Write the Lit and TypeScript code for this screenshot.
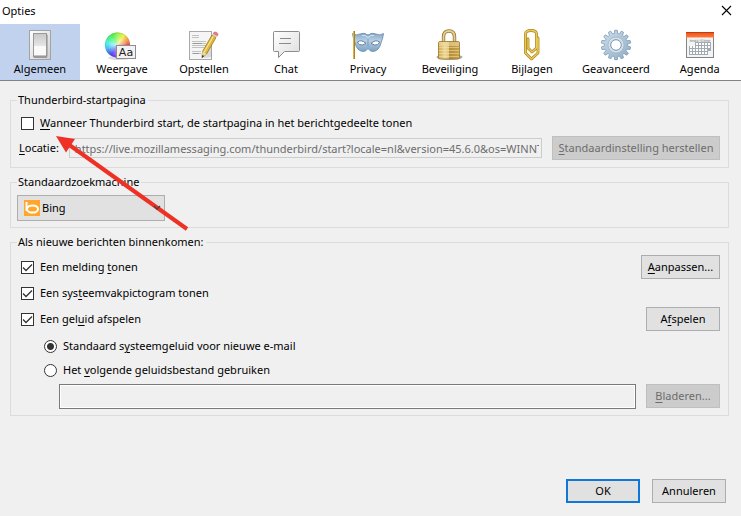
import { LitElement, html, svg, css, nothing, type SVGTemplateResult } from "lit";
import { customElement, property, state } from "lit/decorators.js";
import { classMap } from "lit/directives/class-map.js";

const polar = (cx: number, cy: number, r: number, deg: number) => {
  const a = (deg * Math.PI) / 180;
  return `${(cx + r * Math.cos(a)).toFixed(2)} ${(cy - r * Math.sin(a)).toFixed(2)}`;
};

const wheel = () =>
  Array.from({ length: 60 }, (_, i) => {
    const from = i * 6 - 1;
    const to = i * 6 + 7;
    return svg`<path d="M11.5 16 L${polar(11.5, 16, 12.5, from)} A12.5 12.5 0 0 0 ${polar(11.5, 16, 12.5, to)} Z" fill="hsl(${i * 6 + 5} 85% 60%)"/>`;
  });

const gearPath = () => {
  const teeth = 14;
  const step = 360 / teeth;
  const pts: string[] = [];
  for (let i = 0; i < teeth; i++) {
    const a = i * step + 90;
    pts.push(
      polar(16, 16, 11.6, a - step * 0.33),
      polar(16, 16, 14.8, a - step * 0.2),
      polar(16, 16, 14.8, a + step * 0.2),
      polar(16, 16, 11.6, a + step * 0.33),
    );
  }
  return `M${pts.join("L")}Z`;
};

const ICONS: Record<string, () => SVGTemplateResult> = {
  general: () => svg`
    <defs>
      <linearGradient id="plate" x2="1" y2="1"><stop stop-color="#fff"/><stop offset="1" stop-color="#cfcfcf"/></linearGradient>
      <linearGradient id="rocker" x2="0" y2="1"><stop stop-color="#c9c9c9"/><stop offset="1" stop-color="#e6e6e6"/></linearGradient>
    </defs>
    <rect x="5.5" y="1.5" width="21" height="29" fill="url(#plate)" stroke="#a3a3a3"/>
    <path d="M9 27h14v2H10z" fill="#999"/>
    <path d="M22 5l2 1v22l-2-1z" fill="#b4b4b4"/>
    <rect x="9.5" y="4.5" width="13" height="23" fill="#fafafa" stroke="#999"/>
    <rect x="10" y="5" width="12" height="12" fill="url(#rocker)"/>
    <path d="M10 26.5h12" stroke="#c4c4c4"/>`,
  display: () => svg`
    <defs>
      <radialGradient id="glow"><stop stop-color="#fff" stop-opacity=".6"/><stop offset="1" stop-color="#fff" stop-opacity="0"/></radialGradient>
    </defs>
    <ellipse cx="13" cy="29" rx="11" ry="2" fill="#ddd"/>
    ${wheel()}
    <circle cx="11.5" cy="16" r="11" fill="url(#glow)"/>
    <circle cx="11.5" cy="16" r="12.3" fill="none" stroke="#555" stroke-opacity=".25" stroke-width=".6"/>
    <rect x="10.5" y="16.5" width="19" height="13" fill="#f3f3f3" stroke="#8e8e8e"/>
    <text x="20" y="27" text-anchor="middle" font-family="DejaVu Sans, sans-serif" font-size="11" fill="#222">Aa</text>`,
  compose: () => svg`
    <rect x="1.5" y="2.5" width="22" height="28" fill="#f5f5f5" stroke="#a9a9a9"/>
    <path d="M4 6.5h7M4 8.5h7M4 12.5h14M4 14.5h14M4 16.5h15M4 18.5h12M4 22.5h9M4 24.5h9" stroke="#c2c2c2"/>
    <path d="M5 14.5h9M5 24.5h6" stroke="#999"/>
    <path d="M15 29l9-1-1-12z" fill="#888" opacity=".25"/>
    <path d="M24 6l4 2.600-9.500 16.400-4.500 3.500.5-6z" fill="#dfb93c" stroke="#8c6a12" stroke-width=".7"/>
    <path d="M25.300 7.200L16 23.500" stroke="#f8e38c" stroke-width="1.300"/>
    <path d="M14.500 22.500l4 2.500-4.500 3.500z" fill="#f0dca8"/>
    <path d="M14.300 26l2 1-2.500 2z" fill="#333"/>
    <path d="M24 6l1.200-2 4.200 2.600-1.300 2z" fill="#c8cdd0"/>
    <path d="M25.200 4.200q1.300-2 3.600-.8 2 1.300.8 3.400z" fill="#ee7c79" stroke="#cf5e60" stroke-width=".6"/>`,
  chat: () => svg`
    <defs><linearGradient id="bubble" x2="1" y2="1"><stop stop-color="#fff"/><stop offset="1" stop-color="#ddd"/></linearGradient></defs>
    <path d="M4.500 2.500h24q1 0 1 1v18q0 1-1 1H14.500l-6 6v-6H4.500q-1 0-1-1v-18q0-1 1-1z" fill="url(#bubble)" stroke="#8c8c8c"/>
    <path d="M10 9.500h11M9 14.500h12" stroke="#8a8a8a"/>`,
  privacy: () => svg`
    <defs><linearGradient id="mask" x2="0" y2="1"><stop stop-color="#86a9c8"/><stop offset=".4" stop-color="#b7cee2"/><stop offset="1" stop-color="#7ba2c6"/></linearGradient></defs>
    <path d="M.5 4.500Q4 7 8 5q4-2 8 1 4-3 8-1 4 2 7.500-.5Q31 9 29 14q-2 8-8 8.500-3 0-5-3-2 3-5 3Q5 22 3 14 1 9 .5 4.500z" fill="url(#mask)" stroke="#6587a6" stroke-width=".8"/>
    <path d="M2 2v28" stroke="#a47412" stroke-width="2"/>
    <path d="M1.700 2v28" stroke="#e9c04e"/>
    <path d="M10 6.500q3-1 6 2 3-3 6-2" fill="none" stroke="#d3e4f2"/>
    <path d="M16 10v8" stroke="#7b9dbd"/>
    <path d="M5.500 13q4-3 8.500 1.500-4 2.500-6.500 1-1.500-1-2-2.500zM27.500 13q-4-3-8.500 1.500 4 2.500 6.500 1 1.500-1 2-2.500z" fill="#fff" stroke="#54779c" stroke-width=".9"/>`,
  security: () => svg`
    <defs>
      <linearGradient id="brass"><stop stop-color="#cda950"/><stop offset=".3" stop-color="#eed797"/><stop offset=".5" stop-color="#dfc27a"/><stop offset=".51" stop-color="#b58c38"/><stop offset="1" stop-color="#c9a24c"/></linearGradient>
    </defs>
    <ellipse cx="15.500" cy="28" rx="13" ry="3" fill="#555" opacity=".5"/>
    <path d="M9.500 14V8q0-6 5.500-6t5.500 6v6" fill="none" stroke="#94762f" stroke-width="3.400"/>
    <path d="M9.500 14V8q0-6 5.500-6t5.500 6v6" fill="none" stroke="#e6cf92" stroke-width="1.800"/>
    <rect x="4.500" y="12.500" width="21" height="17.500" rx="1.500" fill="url(#brass)" stroke="#9a7626" stroke-width=".8"/>
    <rect x="5" y="13" width="20" height="4" fill="#f0dda4" opacity=".6"/>
    <path d="M5 18.500h20M5 21.500h20M5 24.500h20M5 27.500h20" stroke="#f6e7b4" stroke-opacity=".65" stroke-width=".8"/>`,
  attachments: () => svg`
    <g fill="none" stroke-linejoin="round" stroke-linecap="round">
      <path d="M22 9V24L15.500 30 9.500 24V5q0-3.500 5.500-3.500T20.500 5V19L16 23l-4-4V10" stroke="#a98520" stroke-width="2.800"/>
      <path d="M22 9V24L15.500 30 9.500 24V5q0-3.500 5.500-3.500T20.500 5V19L16 23l-4-4V10" stroke="#ecca55" stroke-width="1.400"/>
    </g>`,
  advanced: () => svg`
    <defs><linearGradient id="steel" x2="1" y2="1"><stop stop-color="#cfe0ec"/><stop offset="1" stop-color="#8eabc3"/></linearGradient></defs>
    <path d="${gearPath()}" fill="url(#steel)" stroke="#7e9bb4" stroke-width=".8"/>
    <circle cx="16" cy="16" r="8" fill="#d5e2ec" stroke="#9db5c9" stroke-width=".8"/>
    <circle cx="16" cy="16" r="5.300" fill="#fff" stroke="#7893ac"/>`,
  calendar: () => svg`
    <defs><linearGradient id="band" x2="0" y2="1"><stop stop-color="#e8501a"/><stop offset="1" stop-color="#ff7a3a"/></linearGradient></defs>
    <rect x="2.500" y="3.500" width="27" height="25" fill="#f4f4f4" stroke="#858585"/>
    <rect x="2" y="3" width="28" height="5.500" fill="url(#band)"/>
    <path d="M2 3.500h28" stroke="#c03d10"/>
    <text x="16" y="12.500" text-anchor="middle" font-family="DejaVu Sans, sans-serif" font-size="4" font-weight="bold" fill="#aaa">moz-time</text>
    <path d="M11 13h16v9h-3v4H5V17h6z" fill="#a3a9b1"/>
    <path d="M12 14h2v2h-2zm3 0h2v2h-2zm3 0h2v2h-2zm3 0h2v2h-2zm3 0h2v2h-2zM6 17h2v2H6zm3 0h2v2H9zm3 0h2v2h-2zm3 0h2v2h-2zm3 0h2v2h-2zm3 0h2v2h-2zm3 0h2v2h-2zM6 20h2v2H6zm3 0h2v2H9zm3 0h2v2h-2zm3 0h2v2h-2zm3 0h2v2h-2zm3 0h2v2h-2zM6 23h2v2H6zm3 0h2v2H9zm3 0h2v2h-2zm3 0h2v2h-2zm3 0h2v2h-2zm3 0h2v2h-2z" fill="#fff"/>`,
};

const TABS = [
  ["general", "Algemeen"],
  ["display", "Weergave"],
  ["compose", "Opstellen"],
  ["chat", "Chat"],
  ["privacy", "Privacy"],
  ["security", "Beveiliging"],
  ["attachments", "Bijlagen"],
  ["advanced", "Geavanceerd"],
  ["calendar", "Agenda"],
];

@customElement("tab-icon")
class TabIcon extends LitElement {
  @property() name = "general";

  static styles = css`
    :host { display: block; width: 32px; height: 32px; }
    svg { display: block; width: 32px; height: 32px; overflow: visible; }
  `;

  render() {
    return html`<svg viewBox="0 0 32 32" aria-hidden="true">${ICONS[this.name]()}</svg>`;
  }
}

@customElement("app-root")
class AppRoot extends LitElement {
  @state() private tab = "general";

  static styles = css`
    * { box-sizing: border-box; }
    :host {
      display: flex;
      flex-direction: column;
      position: relative;
      min-height: 100vh;
      background: #f0f0f0;
      color: #000;
      font: 11px/16px "Noto Sans", "Open Sans", sans-serif;
    }
    button, input, select { font: inherit; color: inherit; margin: 0; border-radius: 0; }
    u { text-underline-offset: 2px; }

    .titlebar {
      display: flex;
      justify-content: space-between;
      align-items: center;
      height: 24px;
      padding: 0 8px 2px 2px;
      background: #fff;
    }
    .title { font: inherit; margin: 0; }
    .close { display: block; width: 12px; height: 12px; padding: 0; border: 0; background: none; }
    .close svg { display: block; }

    .tabs {
      display: flex;
      gap: 2px;
      background: #fff;
      border-bottom: 1px solid #828282;
    }
    .tab {
      flex: none;
      min-width: 80px;
      display: flex;
      flex-direction: column;
      align-items: center;
      padding: 5px 8px 3px;
      border: 0;
      background: none;
      white-space: nowrap;
    }
    .tab.active { background: #c1d2ee; }

    main { display: flex; flex-direction: column; gap: 6px; padding: 11px 12px 0 10px; }
    fieldset { margin: 0; min-width: 0; border: 1px solid #dcdcdc; padding: 5px 8px 7px 6px; }
    legend { padding: 0 2px 0 1px; }
    .row { display: flex; align-items: center; gap: 10px; }
    .stack { display: flex; flex-direction: column; gap: 2px; }
    .line { display: flex; align-items: center; justify-content: space-between; height: 24px; }
    .check { display: flex; align-items: center; gap: 6px; padding-left: 4px; }
    .startpage .check { height: 20px; margin-bottom: 3px; }
    .location { padding-left: 2px; }

    input[type="checkbox"], input[type="radio"] {
      appearance: none;
      flex: none;
      width: 13px;
      height: 13px;
      border: 1px solid #333;
      background: #fff center / 11px 11px no-repeat;
    }
    input[type="checkbox"]:checked {
      background-image: url("data:image/svg+xml,%3Csvg xmlns='http://www.w3.org/2000/svg' viewBox='0 0 11 11'%3E%3Cpath d='M1 5.500l3 3 6-6' fill='none' stroke='%23333' stroke-width='1.300'/%3E%3C/svg%3E");
    }
    input[type="radio"] { border-radius: 50%; }
    input[type="radio"]:checked { background-image: radial-gradient(circle, #333 3px, transparent 4px); }

    input[type="text"] {
      flex: 1;
      min-width: 0;
      height: 20px;
      padding: 0 2px 0 5px;
      border: 1px solid #ccc;
      background: #f0f0f0;
      color: #6d6d6d;
    }
    .files input[type="text"] { height: 25px; border-color: #7a7a7a; box-shadow: inset 0 0 0 1px #fff; }

    .btn {
      min-width: 74px;
      height: 24px;
      padding: 0 5px;
      border: 1px solid #adadad;
      background: #e1e1e1;
      line-height: 20px;
      white-space: nowrap;
    }
    .btn:disabled { background: #ccc; border-color: #bfbfbf; color: #6d6d6d; }
    .btn.primary { border: 2px solid #0f77d7; }
    .btn.reset { width: 168px; }
    .btn.adjust { width: 79px; }

    .engines { padding-bottom: 6px; }
    .engine { display: grid; width: 148px; align-items: center; }
    .engine > * { grid-area: 1 / 1; }
    .engine select {
      appearance: none;
      width: 100%;
      height: 26px;
      padding: 0 20px 0 24px;
      border: 1px solid #adadad;
      background: #e1e1e1;
    }
    .engine svg { pointer-events: none; z-index: 1; }
    .bing { margin-left: 7px; }
    .chevron { justify-self: end; margin-right: 4px; }

    .incoming { padding-bottom: 6px; }
    .radios { display: flex; flex-direction: column; padding: 3px 0 2px 27px; }
    .radios .radio { display: flex; align-items: center; gap: 6px; height: 24px; }
    .files { align-items: flex-start; padding-left: 42px; }

    footer {
      display: flex;
      justify-content: flex-end;
      gap: 12px;
      margin-top: auto;
      padding: 13px 15px 13px;
    }
    .arrow { position: absolute; left: 52px; top: 132px; pointer-events: none; }
  `;

  private check(label: unknown, checked: boolean) {
    return html`<label class="check"><input type="checkbox" ?checked=${checked} /><span>${label}</span></label>`;
  }

  render() {
    return html`
      <header class="titlebar">
        <h1 class="title">Opties</h1>
        <button class="close" aria-label="Sluiten">
          <svg width="12" height="12" viewBox="0 0 12 12"><path d="M1 1l9 9M10 1l-9 9" stroke="#000" stroke-width="1.100" /></svg>
        </button>
      </header>
      <nav class="tabs" role="tablist">
        ${TABS.map(
          ([id, label]) => html`
            <button
              class=${classMap({ tab: true, active: this.tab === id })}
              role="tab"
              aria-selected=${this.tab === id ? "true" : "false"}
              @click=${() => (this.tab = id)}
            ><tab-icon name=${id}></tab-icon><span>${label}</span></button>`,
        )}
      </nav>
      ${this.tab === "general" ? this.general() : nothing}
      <footer>
        <button class="btn primary">OK</button>
        <button class="btn">Annuleren</button>
      </footer>
    `;
  }

  private general() {
    return html`
      <main>
        <fieldset class="startpage">
          <legend>Thunderbird-startpagina</legend>
          ${this.check(html`<u>W</u>anneer Thunderbird start, de startpagina in het berichtgedeelte tonen`, false)}
          <div class="row location">
            <label for="url"><u>L</u>ocatie:</label>
            <input id="url" type="text" disabled
              value="https://live.mozillamessaging.com/thunderbird/start?locale=nl&version=45.6.0&os=WINNT" />
            <button class="btn reset" disabled><u>S</u>tandaardinstelling herstellen</button>
          </div>
        </fieldset>
        <fieldset class="engines">
          <legend>Standaardzoekmachine</legend>
          <div class="engine">
            <select aria-label="Standaardzoekmachine"><option>Bing</option></select>
            <svg class="bing" width="16" height="16" viewBox="0 0 16 16" aria-hidden="true">
              <rect width="16" height="16" fill="#ffa62b" />
              <path d="M2.500 2v9" stroke="#fff" stroke-width="2" fill="none" />
              <ellipse cx="8.500" cy="9" rx="5.500" ry="3.600" fill="none" stroke="#fff" stroke-width="2" />
            </svg>
            <svg class="chevron" width="8" height="6" viewBox="0 0 8 6" aria-hidden="true">
              <path d="M1 1l3 3 3-3" fill="none" stroke="#444" stroke-width="1.300" />
            </svg>
          </div>
        </fieldset>
        <fieldset class="incoming">
          <legend>Als nieuwe berichten binnenkomen:</legend>
          <div class="stack">
            <div class="line">
              ${this.check(html`Een melding <u>t</u>onen`, true)}
              <button class="btn adjust"><u>A</u>anpassen...</button>
            </div>
            <div class="line">${this.check(html`Een sys<u>t</u>eemvakpictogram tonen`, true)}</div>
            <div class="line">
              ${this.check(html`Een gel<u>u</u>id afspelen`, true)}
              <button class="btn">A<u>f</u>spelen</button>
            </div>
          </div>
          <div class="radios">
            <label class="radio"><input type="radio" name="sound" checked /><span>Standaard s<u>y</u>steemgeluid voor nieuwe e-mail</span></label>
            <label class="radio"><input type="radio" name="sound" /><span>Het <u>v</u>olgende geluidsbestand gebruiken</span></label>
          </div>
          <div class="row files">
            <input type="text" disabled aria-label="Geluidsbestand" />
            <button class="btn" disabled><u>B</u>laderen...</button>
          </div>
        </fieldset>
      </main>
      <svg class="arrow" width="140" height="104" viewBox="52 132 140 104" aria-hidden="true">
        <path d="M68 144L187 229" stroke="#ee3124" stroke-width="4" />
        <path d="M56 136l19 3-9 13.500z" fill="#ee3124" />
      </svg>
    `;
  }
}
